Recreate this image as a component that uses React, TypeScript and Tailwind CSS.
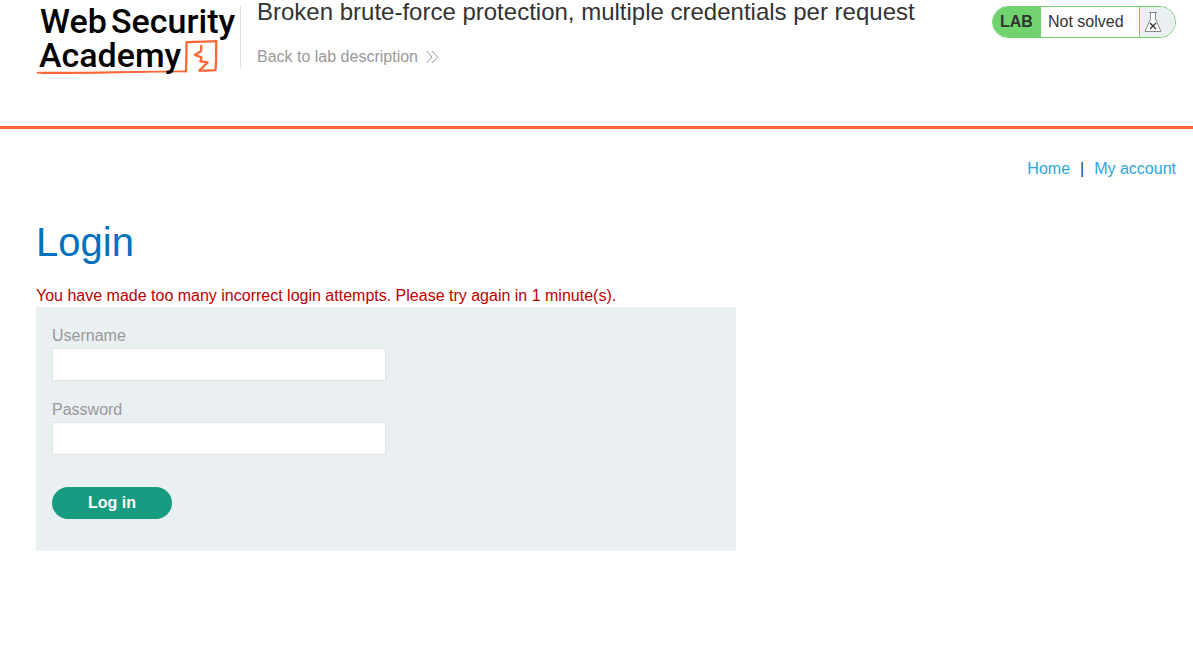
import React from "react";

function AcademyLogo() {
  return (
    <svg width="204" height="80" viewBox="0 0 204 80" role="img" aria-label="Web Security Academy" className="block shrink-0">
      <g fill="none" stroke="#ff6633" strokeLinecap="round" strokeLinejoin="round">
        <path d="M1.5 72.6 C40 73.6 90 71.6 150 71.4" strokeWidth="1.9" />
        <path d="M6 73.3 C40 73.8 70 72.4 110 71.9" strokeWidth="1.4" />
        <path d="M150 71.4 L150.6 42.2 C160 41.2 171 41.8 180.4 41.2 C179.6 51 180.8 60 179.4 70.2 C174 70.6 169 70.6 163.4 70.6" strokeWidth="2.3" />
        <path d="M165.2 46 L165 51.2 L158.8 55 L165.6 57.4 L164.4 61.4 L171.6 62.4 L163.6 70.2" strokeWidth="2.3" />
      </g>
      <g fill="#000000" className="font-['Roboto',sans-serif] font-medium" fontSize="34">
        <text x="4" y="33">Web</text>
        <text x="75" y="33">Security</text>
        <text x="3" y="67">Academy</text>
      </g>
    </svg>
  );
}

function FlaskIcon() {
  return (
    <svg width="18" height="22" viewBox="0 0 18 22" fill="none" aria-hidden="true">
      <path d="M6.5 1.5 V8 L1 20.5 H17 L11.5 8 V1.5 Z" fill="#ffffff" />
      <path d="M5 1.5 H13 M6.5 1.5 V8 L1 20.5 H17 L11.5 8 V1.5" stroke="#8a8a8a" strokeWidth="1" />
      <path d="M6 12 L12 18 M12 12 L6 18" stroke="#333332" strokeWidth="1.3" />
    </svg>
  );
}

function Field({ id, label, type }: { id: string; label: string; type: string }) {
  return (
    <div className="mb-[17px] flex flex-col items-start">
      <label htmlFor={id} className="leading-6 text-[#999999]">
        {label}
      </label>
      <input id={id} name={id} type={type} className="h-[33px] w-1/2 border border-[#e4e4e4] bg-white px-2 text-[#333332] outline-none" />
    </div>
  );
}

export default function App() {
  return (
    <div className="min-h-screen bg-white font-['Liberation_Sans',Arial,sans-serif] text-base text-[#333332]">
      <header className="border-b-3 border-[#ff6633] pr-[17px] pb-[46px] pl-9">
        <div className="flex items-start">
          <AcademyLogo />
          <div className="mt-1.5 h-[62px] w-px shrink-0 bg-[#e0e0e2]" />
          <div className="min-w-0 flex-1 pl-4">
            <h1 className="text-2xl leading-6">Broken brute-force protection, multiple credentials per request</h1>
            <a href="#description" className="mt-[21px] inline-flex items-center gap-[7px] leading-6 text-[#999999]">
              Back to lab description
              <svg width="14" height="14" viewBox="0 0 14 14" fill="none" stroke="#999999" strokeWidth="1" aria-hidden="true">
                <path d="M1.5 1 L7 7 L1.5 13 M7 1 L12.5 7 L7 13" />
              </svg>
            </a>
          </div>
          <div className="mt-1.5 flex h-8 w-46 shrink-0 overflow-hidden rounded-full border border-[#70d36d]">
            <strong className="flex w-12 items-center bg-[#70d36d] pl-[7px]">LAB</strong>
            <span className="flex flex-1 items-center pb-px pl-[7px]">Not solved</span>
            <span className="flex w-9 items-center border-l border-[#70d36d] bg-[#eaeff2] pl-1">
              <FlaskIcon />
            </span>
          </div>
        </div>
      </header>

      <main className="pt-7 pr-[17px] pl-9">
        <nav className="flex justify-end gap-2.5 leading-6 text-[#29a7df]">
          <a href="#home">Home</a>
          <span className="text-[#333332]">|</span>
          <a href="#account">My account</a>
        </nav>
        <h2 className="mt-9 text-[40px] leading-[50px] text-[#0071bc]">Login</h2>
        <p className="mt-[18px] leading-[22px] text-[#bb0000]">
          You have made too many incorrect login attempts. Please try again in 1 minute(s).
        </p>
        <form className="w-full max-w-[700px] bg-[#eaeff2] px-4 pt-[17px] pb-8" onSubmit={(e) => e.preventDefault()}>
          <Field id="username" label="Username" type="text" />
          <Field id="password" label="Password" type="password" />
          <button type="submit" className="mt-8 block h-8 w-30 rounded-full bg-[#169c80] font-bold text-white">
            Log in
          </button>
        </form>
      </main>
    </div>
  );
}
